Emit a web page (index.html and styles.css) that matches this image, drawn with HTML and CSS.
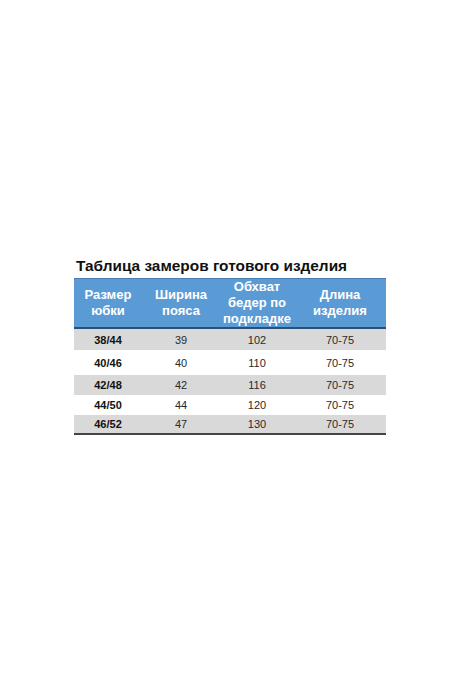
FILE: index.html
```html
<!DOCTYPE html>
<html lang="ru">
<head>
<meta charset="utf-8">
<link rel="stylesheet" href="styles.css">
</head>
<body>
<div class="page">
  <h1 class="title">Таблица замеров готового изделия</h1>
  <table class="sizes">
    <thead>
      <tr>
        <th class="c1">Размер<br>юбки</th>
        <th class="c2">Ширина<br>пояса</th>
        <th class="c3">Обхват<br>бедер по<br>подкладке</th>
        <th class="c4">Длина<br>изделия</th>
      </tr>
    </thead>
    <tbody>
      <tr class="gray h21"><td class="size">38/44</td><td>39</td><td>102</td><td>70-75</td></tr>
      <tr class="h25"><td class="size">40/46</td><td>40</td><td>110</td><td>70-75</td></tr>
      <tr class="gray h20"><td class="size">42/48</td><td>42</td><td>116</td><td>70-75</td></tr>
      <tr class="h20"><td class="size">44/50</td><td>44</td><td>120</td><td>70-75</td></tr>
      <tr class="gray h18"><td class="size">46/52</td><td>47</td><td>130</td><td>70-75</td></tr>
    </tbody>
  </table>
</div>
</body>
</html>
```
FILE: styles.css
```css
html, body {
  margin: 0;
  padding: 0;
  background: #ffffff;
}
body {
  font-family: "Liberation Sans", Arial, sans-serif;
  color: #1a1a1a;
}
.page {
  padding: 255px 0 0 74px;
}
.title {
  margin: 0 0 2px 2px;
  font-size: 15.4px;
  line-height: 21px;
  font-weight: bold;
  color: #111;
}
.sizes {
  width: 312px;
  border-collapse: collapse;
  table-layout: fixed;
}
.sizes th {
  background: #5b9bd5;
  color: #ffffff;
  font-size: 13px;
  line-height: 16px;
  font-weight: bold;
  padding: 0;
  height: 45px;
  text-align: center;
  border-top: 1px solid #4a7fb5;
  border-bottom: 2px solid #2f4f72;
}
.c1 { width: 68px; }
.c2 { width: 78px; }
.c3 { width: 74px; }
.c4 { width: 92px; }
.sizes td {
  font-size: 11px;
  padding: 0;
  text-align: center;
  color: #2a2a2a;
}
.sizes td.size {
  font-weight: bold;
  color: #111;
}
.gray td { background: #d9d9d9; }
.h21 td { height: 21px; }
.h25 td { height: 25px; }
.h20 td { height: 20px; }
.h18 td { height: 18px; }
.sizes tbody tr:last-child td {
  border-bottom: 2px solid #444;
}
```
